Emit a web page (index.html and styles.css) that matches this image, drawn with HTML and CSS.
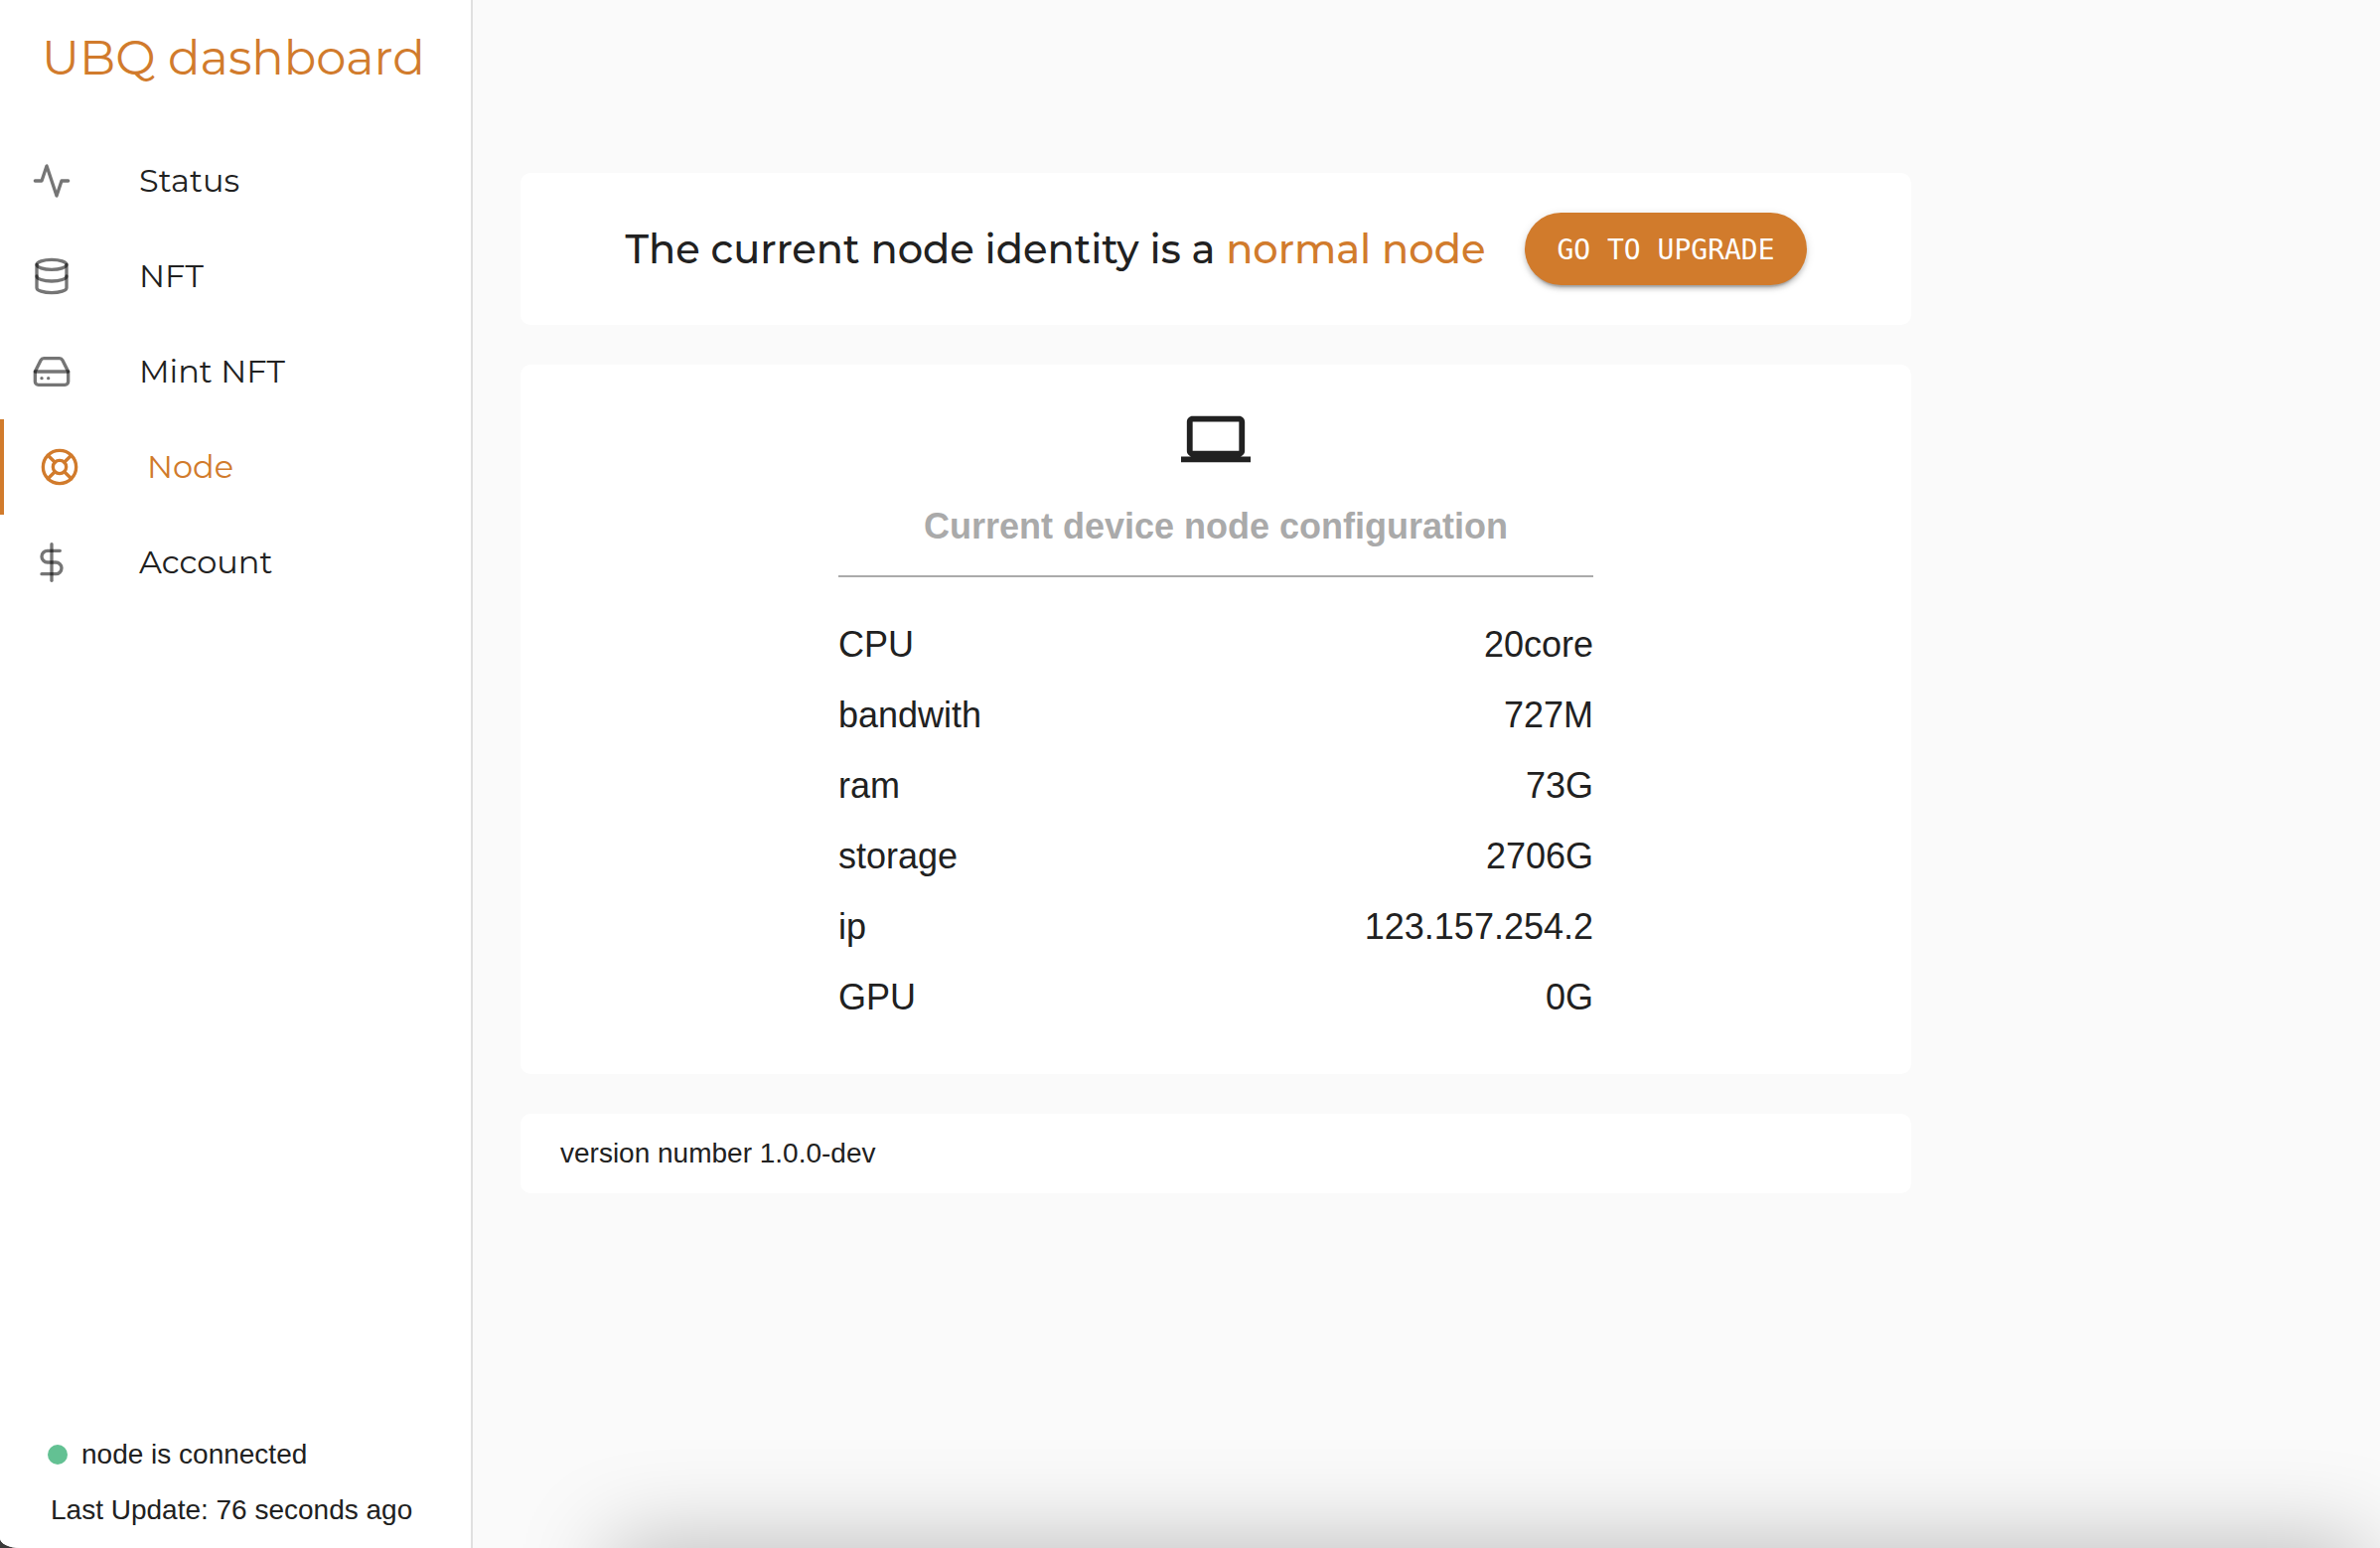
FILE: index.html
```html
<!DOCTYPE html>
<html lang="en">
<head>
<meta charset="utf-8">
<meta name="viewport" content="width=device-width, initial-scale=1">
<title>UBQ dashboard</title>
<link rel="stylesheet" href="styles.css">
</head>
<body>
<div class="app">
  <aside class="sidebar">
    <h1 class="brand">UBQ dashboard</h1>
    <nav class="nav" aria-label="Main">
      <a class="nav-item" href="#status">
        <svg class="icon" viewBox="0 0 24 24" aria-hidden="true"><polyline points="22 12 18 12 15 21 9 3 6 12 2 12"/></svg>
        <span>Status</span>
      </a>
      <a class="nav-item" href="#nft">
        <svg class="icon" viewBox="0 0 24 24" aria-hidden="true"><ellipse cx="12" cy="5" rx="9" ry="3"/><path d="M21 12c0 1.66-4 3-9 3s-9-1.34-9-3"/><path d="M3 5v14c0 1.66 4 3 9 3s9-1.34 9-3V5"/></svg>
        <span>NFT</span>
      </a>
      <a class="nav-item" href="#mint">
        <svg class="icon" viewBox="0 0 24 24" aria-hidden="true"><line x1="22" y1="12" x2="2" y2="12"/><path d="M5.45 5.11L2 12v6a2 2 0 0 0 2 2h16a2 2 0 0 0 2-2v-6l-3.45-6.89A2 2 0 0 0 16.76 4H7.24a2 2 0 0 0-1.79 1.11z"/><line x1="6" y1="16" x2="6.01" y2="16"/><line x1="10" y1="16" x2="10.01" y2="16"/></svg>
        <span>Mint NFT</span>
      </a>
      <a class="nav-item nav-item-active" href="#node" aria-current="page">
        <svg class="icon" viewBox="0 0 24 24" aria-hidden="true"><circle cx="12" cy="12" r="10"/><circle cx="12" cy="12" r="4"/><line x1="4.93" y1="4.93" x2="9.17" y2="9.17"/><line x1="14.83" y1="14.83" x2="19.07" y2="19.07"/><line x1="14.83" y1="9.17" x2="19.07" y2="4.93"/><line x1="4.93" y1="19.07" x2="9.17" y2="14.83"/></svg>
        <span>Node</span>
      </a>
      <a class="nav-item" href="#account">
        <svg class="icon" viewBox="0 0 24 24" aria-hidden="true"><line x1="12" y1="1" x2="12" y2="23"/><path d="M17 5H9.500a3.500 3.500 0 0 0 0 7h5a3.500 3.500 0 0 1 0 7H6"/></svg>
        <span>Account</span>
      </a>
    </nav>
    <footer class="connection">
      <p class="connection-state"><span class="dot"></span>node is connected</p>
      <p class="connection-update">Last Update: 76 seconds ago</p>
    </footer>
  </aside>
  <main class="content">
    <section class="card identity">
      <h2 class="identity-text">The current node identity is a <span class="accent">normal node</span></h2>
      <button class="upgrade" type="button">GO TO UPGRADE</button>
    </section>
    <section class="card device">
      <svg class="laptop" viewBox="0 0 24 24" aria-hidden="true"><path d="M20 18c1.100 0 1.990-.9 1.990-2L22 6c0-1.100-.9-2-2-2H4c-1.100 0-2 .9-2 2v10c0 1.100.9 2 2 2H0v2h24v-2h-4zM4 6h16v10H4V6z"/></svg>
      <h2 class="device-title">Current device node configuration</h2>
      <table class="specs">
        <tbody>
          <tr><th scope="row">CPU</th><td>20core</td></tr>
          <tr><th scope="row">bandwith</th><td>727M</td></tr>
          <tr><th scope="row">ram</th><td>73G</td></tr>
          <tr><th scope="row">storage</th><td>2706G</td></tr>
          <tr><th scope="row">ip</th><td>123.157.254.2</td></tr>
          <tr><th scope="row">GPU</th><td>0G</td></tr>
        </tbody>
      </table>
    </section>
    <section class="card version">version number 1.0.0-dev</section>
  </main>
</div>
</body>
</html>
```
FILE: styles.css
```css
:root {
  --accent: #d17b2c;
  --ink: #212121;
  --muted: #aaaaaa;
  --sans: "Liberation Sans", Arial, sans-serif;
  --display: Montserrat, Inter, sans-serif;
}

* {
  box-sizing: border-box;
}

body {
  margin: 0;
  background: #3a3a3a;
  color: var(--ink);
  font-family: var(--sans);
  font-size: 28px;
  line-height: 40px;
}

h1, h2, p {
  margin: 0;
}

.app {
  position: relative;
  display: flex;
  min-height: 100vh;
  overflow: hidden;
  background: #fafafa;
  border-bottom-left-radius: 20px 10px;
}

/* soft shade along the bottom edge */
.app::after {
  content: "";
  position: absolute;
  left: 620px;
  right: 20px;
  top: 100%;
  height: 80px;
  box-shadow: 0 0 90px 6px rgba(0, 0, 0, 0.25);
  pointer-events: none;
}

.sidebar {
  flex: none;
  display: flex;
  flex-direction: column;
  width: 476px;
  background: #ffffff;
  border-right: 2px solid #e0e0e0;
}

.brand {
  padding: 26px 0 44px 42px;
  color: var(--accent);
  font: 400 48px/64px var(--display);
  white-space: nowrap;
}

.nav {
  display: flex;
  flex-direction: column;
}

.nav-item {
  display: flex;
  align-items: center;
  gap: 68px;
  height: 96px;
  padding-left: 32px;
  color: var(--ink);
  font: 400 32px/48px var(--display);
  text-decoration: none;
}

.nav-item-active {
  padding-left: 36px;
  border-left: 4px solid var(--accent);
  color: var(--accent);
}

.icon {
  flex: none;
  width: 40px;
  height: 40px;
  fill: none;
  stroke: rgba(0, 0, 0, 0.54);
  stroke-width: 2;
  stroke-linecap: round;
  stroke-linejoin: round;
}

.nav-item-active .icon {
  stroke: var(--accent);
}

.connection {
  display: flex;
  flex-direction: column;
  gap: 16px;
  margin-top: auto;
  padding: 0 0 18px 48px;
}

.connection-state {
  display: flex;
  align-items: center;
  gap: 14px;
}

.connection-update {
  padding-left: 3px;
}

.dot {
  width: 20px;
  height: 20px;
  border-radius: 50%;
  background: #63c193;
}

.content {
  flex: 1;
  display: flex;
  flex-direction: column;
  gap: 40px;
  max-width: 1496px;
  padding: 174px 48px 48px;
}

.card {
  background: #ffffff;
  border-radius: 10px;
}

.identity {
  display: flex;
  align-items: center;
  justify-content: center;
  gap: 40px;
  padding: 40px;
}

.identity-text {
  font: 500 40px/56px var(--display);
}

.accent {
  color: var(--accent);
}

.upgrade {
  height: 73px;
  padding: 2px 32px 0;
  border: 0;
  border-radius: 37px;
  background: var(--accent);
  color: #ffffff;
  font: 28px/48px "DejaVu Sans Mono", monospace;
  box-shadow: 0 6px 2px -4px rgba(0, 0, 0, 0.2), 0 4px 4px rgba(0, 0, 0, 0.14), 0 2px 10px rgba(0, 0, 0, 0.12);
}

.device {
  display: flex;
  flex-direction: column;
  align-items: center;
  padding: 40px 40px 42px;
}

.laptop {
  width: 70px;
  height: 70px;
  fill: var(--ink);
}

.device-title {
  width: 760px;
  max-width: 100%;
  margin: 28px 0 32px;
  padding-bottom: 24px;
  border-bottom: 2px solid var(--muted);
  color: var(--muted);
  font-size: 36px;
  line-height: 50px;
  text-align: center;
}

.specs {
  width: 760px;
  max-width: 100%;
  border-collapse: collapse;
  font-size: 36px;
}

.specs th,
.specs td {
  height: 71px;
  padding: 0;
  font-weight: 400;
}

.specs th {
  text-align: left;
}

.specs td {
  text-align: right;
}

.version {
  padding: 20px 40px;
}
```
